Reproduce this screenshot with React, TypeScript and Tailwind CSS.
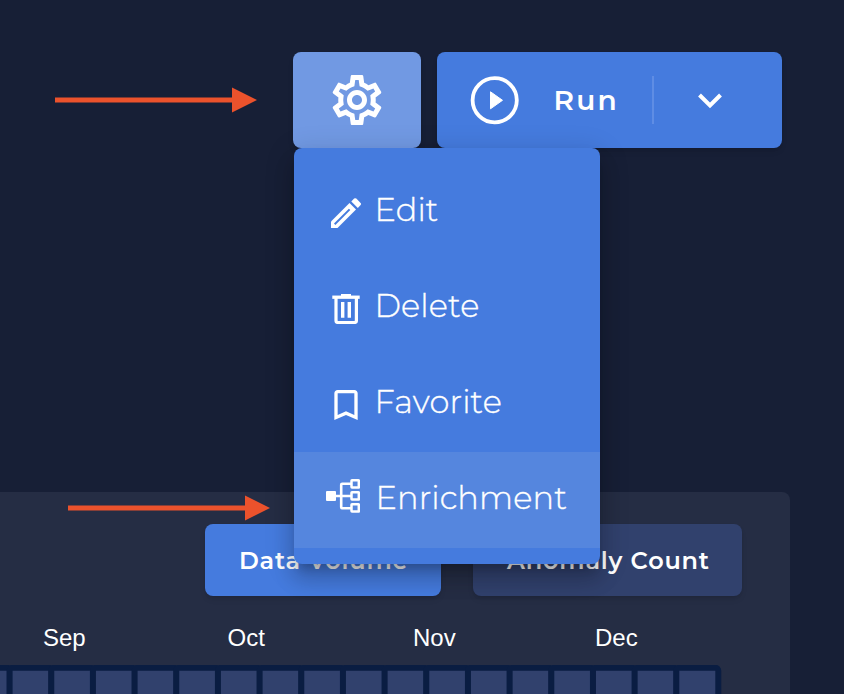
import React from "react";
import { MdOutlineSettings, MdBookmarkBorder } from "react-icons/md";

const FONT = "font-[Montserrat,Inter,sans-serif]";

function PencilIcon() {
  return (
    <svg width="31" height="30" viewBox="0 0 31 30" className="shrink-0">
      <path d="M0 23.500L18.500 5L25 11.500L6.500 30H0Z" fill="white" />
      <path d="M3.700 26.300L18.600 11.400" stroke="#457bde" strokeWidth="2" />
      <path d="M20.300 3.400L23.100 0.600Q24.200 -0.300 25.300 0.600L29.600 4.900Q30.500 6 29.600 7.100L26.800 9.900Z" fill="white" />
    </svg>
  );
}

function TrashIcon() {
  return (
    <svg width="28" height="30" viewBox="0 0 28 30" fill="none" stroke="white" className="shrink-0">
      <path d="M0.300 3.200H27.700" strokeWidth="3.300" />
      <path d="M9 1H19" strokeWidth="2" />
      <path d="M4 4V26.500a2 2 0 0 0 2 2H22.400a2 2 0 0 0 2-2V4" strokeWidth="3.200" />
      <path d="M10.700 8V23.700M17.300 8V23.700" strokeWidth="3.400" />
    </svg>
  );
}

function TreeIcon() {
  return (
    <svg width="34" height="34" viewBox="0 0 34 34" fill="none" stroke="white" className="shrink-0">
      <rect x="0" y="12" width="10" height="10" rx="1" fill="white" stroke="none" />
      <path d="M9 17H25M25 4.800H16.200Q15.200 4.800 15.200 5.800V28.200Q15.200 29.200 16.200 29.200H25" strokeWidth="2.600" />
      <rect x="25.500" y="1.300" width="7.300" height="7.300" rx="0.500" strokeWidth="2.500" />
      <rect x="25.500" y="13.300" width="7.300" height="7.300" rx="0.500" strokeWidth="2.500" />
      <rect x="25.500" y="25.300" width="7.300" height="7.300" rx="0.500" strokeWidth="2.500" />
    </svg>
  );
}

function Arrow({ className, length }: { className: string; length: number }) {
  return (
    <svg className={className} width={length} height="26" viewBox={`0 0 ${length} 26`} fill="#eb522c">
      <rect x="0" y="10.500" width={length - 24} height="5" />
      <path d={`M${length - 25} 0.500L${length} 13L${length - 25} 25.500Z`} />
    </svg>
  );
}

function Heatmap() {
  return (
    <svg width="730" height="30" viewBox="0 0 730 30" className="block">
      {Array.from({ length: 18 }, (_, i) => (
        <rect key={i} x={676.3 - (17 - i) * 41.67} y="2.800" width="42" height="50" rx="3" fill="#31416d" stroke="#0a1d42" strokeWidth="6" />
      ))}
    </svg>
  );
}

export default function App() {
  return (
    <div className={`relative h-[694px] w-[844px] overflow-hidden bg-[#171f36] text-white ${FONT}`}>
      <header className="flex h-[492px] gap-4 pl-[293px] pt-[52px]">
        <div className="relative z-10 h-24 w-32">
          <button className="flex h-24 w-32 items-center justify-center rounded-lg bg-[#7199e3] pb-px shadow-md">
            <MdOutlineSettings size={60} />
          </button>
          <nav className="absolute left-px top-24 flex h-[416px] w-[306px] flex-col rounded-lg bg-[#457bde] pt-4 text-[32px] font-light leading-[48px] tracking-[0.150px] shadow-[0_10px_10px_-6px_rgba(0,0,0,0.2),0_16px_20px_2px_rgba(0,0,0,0.14),0_6px_28px_4px_rgba(0,0,0,0.12)] [-webkit-text-stroke:0.350px_white]">
            <a className="flex h-24 items-center pb-[5px] pl-[37px]">
              <span className="mt-[6px]"><PencilIcon /></span>
              <span className="ml-[12.500px]">Edit</span>
            </a>
            <a className="flex h-24 items-center pb-[5px] pl-[38px]">
              <span className="mt-[6px]"><TrashIcon /></span>
              <span className="ml-[14.500px]">Delete</span>
            </a>
            <a className="flex h-24 items-center pb-[5px] pl-8">
              <MdBookmarkBorder size={40} className="mt-[7px] shrink-0" />
              <span className="ml-[8.500px] tracking-[0.250px]">Favorite</span>
            </a>
            <a className="flex h-24 items-center bg-[#5586de] pb-[5px] pl-8">
              <span className="-mt-[3px]"><TreeIcon /></span>
              <span className="ml-[15.500px]">Enrichment</span>
            </a>
          </nav>
        </div>
        <button className="flex h-24 w-[345px] items-center rounded-lg bg-[#457bde] pl-[33px] shadow-md">
          <svg width="50" height="50" viewBox="0 0 50 50" className="shrink-0">
            <circle cx="24.700" cy="25.200" r="22.100" fill="none" stroke="white" strokeWidth="3.800" />
            <path d="M20.500 16.800L32.500 25.300L20.500 33.800Z" fill="white" stroke="white" strokeLinejoin="round" />
          </svg>
          <span className="ml-[33.500px] w-[98.500px] text-left text-[28px] font-semibold tracking-[2.200px]">Run</span>
          <span className="h-12 w-[2px] bg-[#5f8de4]" />
          <svg width="26" height="18" viewBox="0 0 26 18" className="ml-[43px]" fill="none" stroke="white" strokeWidth="4">
            <path d="M2.500 4L13 14.500L23.500 4" />
          </svg>
        </button>
      </header>
      <section className="h-[202px] w-[790px] rounded-tr-lg bg-[#252d44] pt-8">
        <div className="flex gap-8 pl-[205px] text-[24px] font-semibold">
          <button className="h-[72px] w-[236px] whitespace-nowrap rounded-lg bg-[#457bde] pl-[34px] pt-px text-left tracking-[0.800px] shadow-md">Data Volume</button>
          <button className="h-[72px] w-[269px] whitespace-nowrap rounded-lg bg-[#31416d] pl-[34px] pt-px text-left tracking-[0.800px] shadow-md">Anomaly Count</button>
        </div>
        <div className="flex h-[69px] pl-[43px] pt-7 font-['Liberation_Sans',sans-serif] text-[24px] leading-7">
          <span className="w-[184.500px]">Sep</span>
          <span className="w-[185.500px]">Oct</span>
          <span className="w-[182px]">Nov</span>
          <span>Dec</span>
        </div>
        <Heatmap />
      </section>
      <Arrow className="absolute left-[55px] top-[87px]" length={202} />
      <Arrow className="absolute left-[68px] top-[495px]" length={202} />
    </div>
  );
}
